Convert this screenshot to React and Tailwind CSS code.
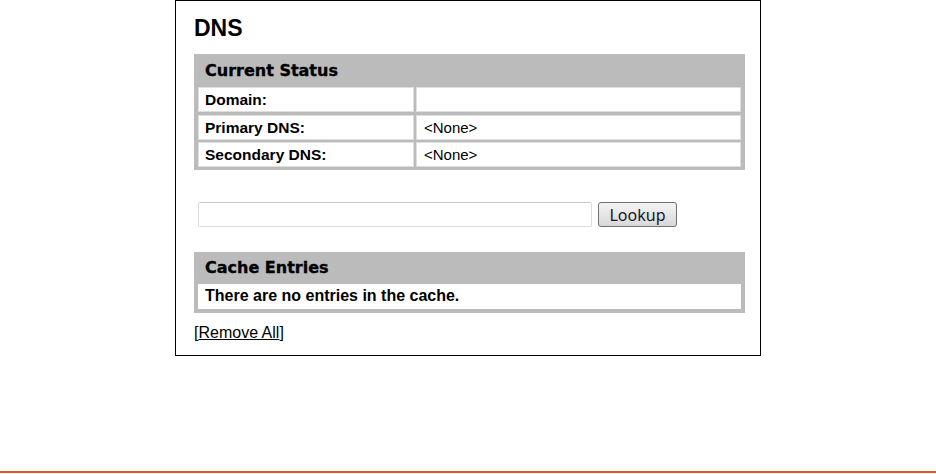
import React, { useState } from 'react';

const statusRows = [
    { label: 'Domain:', value: '' },
    { label: 'Primary DNS:', value: '<None>' },
    { label: 'Secondary DNS:', value: '<None>' },
];

const App = () => {
    const [host, setHost] = useState('');

    return (
        <div className="flex h-[474px] flex-col bg-white font-['Liberation_Sans',Arial,sans-serif] text-black">
            <div className="mx-auto w-[586px] border border-black pl-[18px] pr-[15px] pt-[13px] pb-[12px]">
                <h1 className="text-[23px] font-bold leading-[28px]">DNS</h1>

                <div className="mt-[12px] bg-[#bbbbbb] px-[4px] pb-[3px]">
                    <div className="h-[33px] pl-[7px] font-['DejaVu_Sans',sans-serif] text-[16px] font-bold leading-[33px] [-webkit-text-stroke:0.35px_black]">
                        Current Status
                    </div>
                    <div className="flex flex-col gap-[2.5px]">
                        {statusRows.map((row) => (
                            <div key={row.label} className="grid grid-cols-[216px_1fr] gap-x-[2px]">
                                <div className="h-[25px] border border-[#dedede] bg-white pl-[6px] text-[15.5px] font-bold leading-[23px]">
                                    {row.label}
                                </div>
                                <div className="h-[25px] border border-[#dedede] bg-white pl-[7px] text-[15px] leading-[23px]">
                                    {row.value}
                                </div>
                            </div>
                        ))}
                    </div>
                </div>

                <div className="mt-[32px] flex items-center gap-[6px] pl-[4px]">
                    <input
                        type="text"
                        value={host}
                        onChange={(e) => setHost(e.target.value)}
                        className="h-[25px] w-[394px] rounded-[2px] border border-[#dcdcdc] border-t-[#c9c9c9] bg-white px-1 text-[15px] outline-none"
                    />
                    <button className="h-[25px] w-[79px] rounded-[3px] border border-[#707070] bg-gradient-to-b from-[#f4f4f4] to-[#d8d8d8] font-['Noto_Sans',sans-serif] text-[16px] leading-[22px] text-[#16162a]">
                        Lookup
                    </button>
                </div>

                <div className="mt-[25px] bg-[#bbbbbb] px-[4px] pb-[4px]">
                    <div className="h-[32px] pl-[7px] font-['DejaVu_Sans',sans-serif] text-[16px] font-bold leading-[32px] [-webkit-text-stroke:0.35px_black]">
                        Cache Entries
                    </div>
                    <div className="h-[25px] bg-white pl-[7px] text-[16px] font-bold leading-[24px]">
                        There are no entries in the cache.
                    </div>
                </div>

                <div className="mt-[10px] text-[16px] leading-[20px]">
                    [<a href="#" className="text-black underline">Remove All</a>]
                </div>
            </div>

            <div className="mt-auto mb-[1px] h-[2px] w-full bg-[#e9561f]" />
        </div>
    );
};

export default App;
